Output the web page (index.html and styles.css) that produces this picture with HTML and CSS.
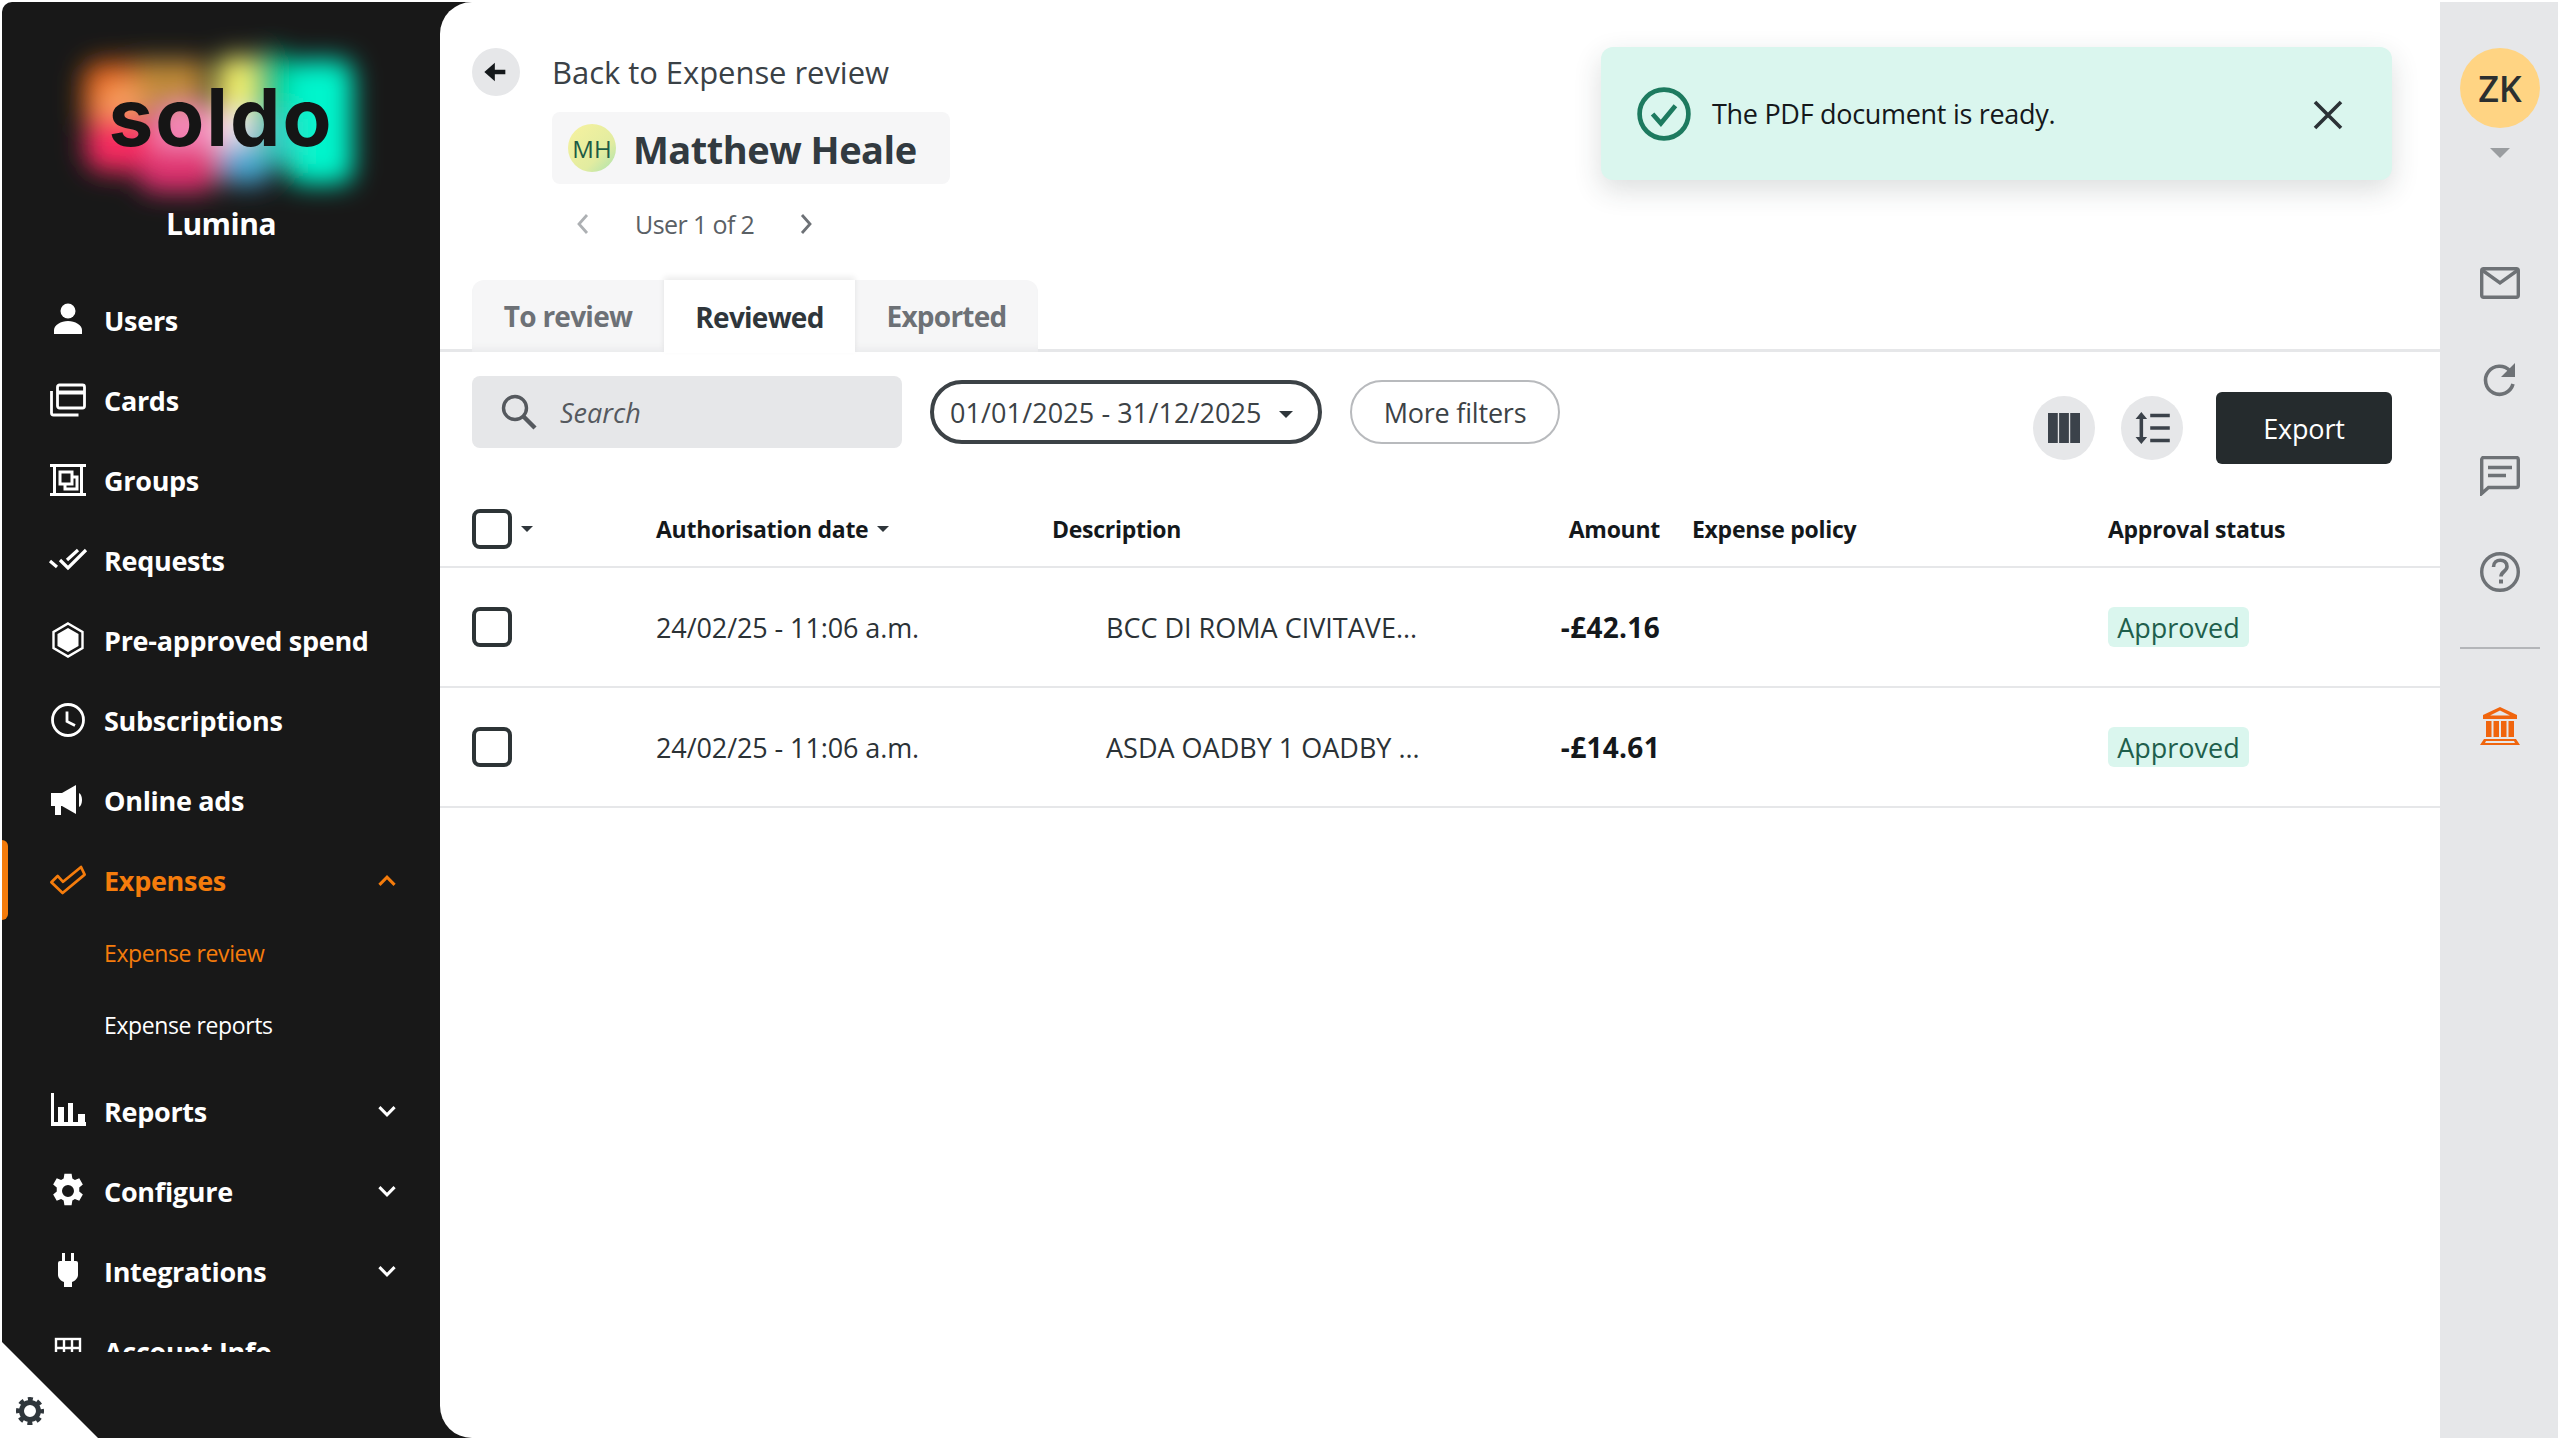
FILE: index.html
```html
<!DOCTYPE html>
<html lang="en">
<head>
<meta charset="utf-8">
<title>Expense review</title>
<link rel="stylesheet" href="styles.css">
</head>
<body>
<div class="shell">
  <aside class="sidebar">
    <div class="brand">
      <div class="logo">
        <svg class="logo-glow" viewBox="0 0 320 160" aria-hidden="true">
          <defs><filter id="blur" x="-30%" y="-30%" width="160%" height="160%"><feGaussianBlur stdDeviation="13"/></filter></defs>
          <g filter="url(#blur)">
            <rect x="22" y="22" width="62" height="70" rx="18" fill="#e8691a"/>
            <rect x="74" y="20" width="70" height="52" fill="#c08a38"/>
            <ellipse cx="62" cy="68" rx="24" ry="24" fill="#f6a061"/>
            <rect x="24" y="78" width="74" height="54" rx="20" fill="#f62a60"/>
            <rect x="92" y="66" width="70" height="68" rx="18" fill="#f586b8"/>
            <rect x="78" y="108" width="78" height="44" rx="16" fill="#e03070"/>
            <rect x="156" y="16" width="40" height="68" rx="12" fill="#f2ee6a"/>
            <rect x="160" y="72" width="34" height="40" fill="#eeecf6"/>
            <rect x="160" y="104" width="50" height="40" rx="12" fill="#4aa6d4"/>
            <rect x="194" y="12" width="34" height="76" rx="10" fill="#0cbf83"/>
            <rect x="226" y="20" width="66" height="124" rx="14" fill="#00f5cc"/>
            <rect x="198" y="70" width="38" height="54" fill="#30ccc0"/>
          </g>
        </svg>
        <span class="logo-word">soldo</span>
      </div>
      <div class="company">Lumina</div>
    </div>
    <nav class="nav">
      <a class="nav-item"><svg class="nav-icon" viewBox="0 0 36 36"><circle cx="18" cy="9" r="7.500" fill="currentColor"/><path d="M4 32v-4c0-5 7-9 14-9s14 4 14 9v4z" fill="currentColor"/></svg><span>Users</span></a>
      <a class="nav-item"><svg class="nav-icon" viewBox="0 0 36 36" fill="none" stroke="currentColor" stroke-width="2.800"><rect x="7.500" y="3" width="27" height="23" rx="2"/><path d="M7.500 10.500h27" stroke-width="4"/><path d="M1.500 9v22a2 2 0 0 0 2 2h25"/></svg><span>Cards</span></a>
      <a class="nav-item"><svg class="nav-icon" viewBox="0 0 36 36" fill="none" stroke="currentColor" stroke-width="3"><path d="M4.500 2v32M31.500 2v32M0 3.500h36M0 32.500h36"/><path d="M10 10h12v12H10z"/><path d="M15 22v5h12V15h-5"/></svg><span>Groups</span></a>
      <a class="nav-item"><svg class="nav-icon" viewBox="0 0 36 36" fill="none" stroke="currentColor" stroke-width="3.200"><path d="M0 19l7 6M10 18l8 8L36 8M17 18l11-10"/></svg><span>Requests</span></a>
      <a class="nav-item"><svg class="nav-icon" viewBox="0 0 36 36"><path d="M18 1.500l14.500 8.500v16L18 34.500 3.500 26V10z" fill="none" stroke="currentColor" stroke-width="2.400"/><path d="M18 6l10.500 6v12L18 30 7.500 24V12z" fill="currentColor"/></svg><span>Pre-approved spend</span></a>
      <a class="nav-item"><svg class="nav-icon" viewBox="0 0 36 36" fill="none" stroke="currentColor" stroke-width="2.800"><circle cx="18" cy="18" r="15.500"/><path d="M17 9.500v10l8 4"/></svg><span>Subscriptions</span></a>
      <a class="nav-item"><svg class="nav-icon" viewBox="0 0 36 36"><path d="M1 11h11l14-8v29l-14-8h-1l0 9H5v-9H1z" fill="currentColor"/><path d="M29 11c4 2 4 12 0 14z" fill="currentColor"/></svg><span>Online ads</span></a>
      <a class="nav-item nav-active"><svg class="nav-icon" viewBox="0 0 40 32" fill="none" stroke="currentColor" stroke-width="3"><path d="M1.500 18.500L14 30.500 38.500 10l-4-8.500L14.500 18l-6-6.500z" stroke-linejoin="round"/></svg><span>Expenses</span><svg class="chev" viewBox="0 0 18 12"><path d="M2 10l7-7 7 7" fill="none" stroke="currentColor" stroke-width="2.800"/></svg></a>
      <a class="sub-item sub-active">Expense review</a>
      <a class="sub-item">Expense reports</a>
      <a class="nav-item"><svg class="nav-icon" viewBox="0 0 36 36" fill="currentColor"><path d="M1 0h3v29h32v4H1z"/><path d="M8 14h6v15H8zM18 10h5v19h-5zM28 21h7v8h-7z"/></svg><span>Reports</span><svg class="chev" viewBox="0 0 18 12"><path d="M2 2l7 7 7-7" fill="none" stroke="currentColor" stroke-width="2.800"/></svg></a>
      <a class="nav-item"><svg class="nav-icon" viewBox="0 0 24 24" fill="currentColor"><path fill-rule="evenodd" d="M14.400 0.500l.5 3.100 1.700 1 2.900-1.100 2.400 4.100-2.400 2v2.800l2.400 2-2.400 4.100-2.900-1.100-1.700 1-.5 3.100H9.600l-.5-3.100-1.700-1-2.900 1.100-2.400-4.100 2.400-2V9.600l-2.400-2 2.400-4.100 2.900 1.100 1.700-1 .5-3.100zM12 8a4 4 0 1 0 0 8 4 4 0 0 0 0-8z"/></svg><span>Configure</span><svg class="chev" viewBox="0 0 18 12"><path d="M2 2l7 7 7-7" fill="none" stroke="currentColor" stroke-width="2.800"/></svg></a>
      <a class="nav-item"><svg class="nav-icon" viewBox="0 0 36 36" fill="currentColor"><path d="M12 0h3v8h6V0h3v8h2a2 2 0 0 1 2 2v12c0 3-3 6-6 7v5h-8v-5c-3-1-6-4-6-7V10a2 2 0 0 1 2-2h2z"/></svg><span>Integrations</span><svg class="chev" viewBox="0 0 18 12"><path d="M2 2l7 7 7-7" fill="none" stroke="currentColor" stroke-width="2.800"/></svg></a>
      <a class="nav-item"><svg class="nav-icon" viewBox="0 0 36 36" fill="none" stroke="currentColor" stroke-width="2.400"><rect x="6" y="6" width="24" height="24"/><path d="M6 15h24M6 22h24M14 6v24M22 6v24"/></svg><span>Account Info</span></a>
    </nav>
    <div class="corner"><svg class="corner-gear" viewBox="0 0 28 28" fill="none" stroke="currentColor"><circle cx="14" cy="14" r="8.500" stroke-width="5"/><circle cx="14" cy="14" r="12" stroke-width="4" stroke-dasharray="5 4.425" stroke-dashoffset="2.500"/></svg></div>
  </aside>

  <main class="main">
    <header class="head">
      <div class="back-row">
        <span class="round-btn back-btn"><svg viewBox="0 0 24 24" class="back-ico"><path d="M20 10v4h-9v6L2 12l9-8v6z" fill="currentColor"/></svg></span>
        <span class="back-text">Back to Expense review</span>
      </div>
      <div class="person"><span class="person-av">MH</span><h1 class="person-name">Matthew Heale</h1></div>
      <div class="pager">
        <svg class="pager-ico pager-off" viewBox="0 0 14 22"><path d="M11 2L3 11l8 9" fill="none" stroke="currentColor" stroke-width="2.800"/></svg>
        <span>User 1 of 2</span>
        <svg class="pager-ico" viewBox="0 0 14 22"><path d="M3 2l8 9-8 9" fill="none" stroke="currentColor" stroke-width="2.800"/></svg>
      </div>
    </header>

    <div class="toast">
      <svg class="toast-ok" viewBox="0 0 52 52" fill="none" stroke="#1d7a5f"><circle cx="26" cy="26" r="23.500" stroke-width="4.500"/><path d="M15 26l8 9 14-17" stroke-width="4.500"/></svg>
      <span class="toast-text">The PDF document is ready.</span>
      <svg class="toast-x" viewBox="0 0 30 30" fill="none" stroke="#2b3236" stroke-width="3.600"><path d="M2 2l26 26M28 2L2 28"/></svg>
    </div>

    <div class="tabs">
      <span class="tab">To review</span>
      <span class="tab tab-on">Reviewed</span>
      <span class="tab">Exported</span>
    </div>

    <div class="toolbar">
      <div class="search">
        <svg class="search-ico" viewBox="0 0 36 36" fill="none" stroke="currentColor"><circle cx="14" cy="14" r="11.500" stroke-width="3.400"/><path d="M22.500 22.500L34 34" stroke-width="4.400"/></svg>
        <span>Search</span>
      </div>
      <div class="date-pill"><span>01/01/2025 - 31/12/2025</span><i class="caret caret-md"></i></div>
      <div class="filter-pill">More filters</div>
      <div class="tools">
        <span class="round-btn tool-btn"><svg class="tool-ico" viewBox="0 0 36 36" fill="currentColor"><path d="M0 1h11v34H0zM12.500 1h11v34h-11zM25 1h11v34H25z"/></svg></span>
        <span class="round-btn tool-btn tool-gap"><svg class="tool-ico" viewBox="0 0 40 36" fill="currentColor"><path d="M8 0l6.500 8h-4.500v20h4.500L8 36l-6.500-8h4.500V8H1.500zM18 2h22v4H18zM18 16h22v4H18zM18 30h22v4H18z"/></svg></span>
        <span class="export">Export</span>
      </div>
    </div>

    <section class="table">
      <div class="row row-head">
        <div class="cell-check"><span class="check"></span><i class="caret caret-sm"></i></div>
        <div class="th">Authorisation date<i class="caret caret-sm"></i></div>
        <div class="th">Description</div>
        <div class="th th-amount">Amount</div>
        <div class="th">Expense policy</div>
        <div class="th">Approval status</div>
      </div>
      <div class="row row-body">
        <div class="cell-check"><span class="check"></span></div>
        <div>24/02/25 - 11:06 a.m.</div>
        <div class="td-desc">BCC DI ROMA CIVITAVE...</div>
        <div class="td-amount">-£42.16</div>
        <div></div>
        <div><span class="badge">Approved</span></div>
      </div>
      <div class="row row-body">
        <div class="cell-check"><span class="check"></span></div>
        <div>24/02/25 - 11:06 a.m.</div>
        <div class="td-desc">ASDA OADBY 1 OADBY ...</div>
        <div class="td-amount">-£14.61</div>
        <div></div>
        <div><span class="badge">Approved</span></div>
      </div>
    </section>
  </main>

  <aside class="rail">
    <div class="rail-avatar">ZK</div>
    <i class="caret caret-rail"></i>
    <svg class="rail-ico ico-mail" viewBox="0 0 40 32" fill="none" stroke="currentColor" stroke-width="3.400"><rect x="1.700" y="1.700" width="36.600" height="28.600" rx="2"/><path d="M2 3l18 13L38 3"/></svg>
    <svg class="rail-ico ico-reload" viewBox="0 0 36 36" fill="none" stroke="currentColor" stroke-width="3.600"><path d="M31 22a14 14 0 1 1-3-13"/><path d="M33 1v14H19z" fill="currentColor" stroke="none"/></svg>
    <svg class="rail-ico ico-chat" viewBox="0 0 40 40" fill="none" stroke="currentColor" stroke-width="3.400"><path d="M1.700 3.500a2 2 0 0 1 2-2h32.600a2 2 0 0 1 2 2v26a2 2 0 0 1-2 2H8.500l-6.800 6z"/><path d="M8 11.500h24M8 19.500h18" stroke-width="3.600"/></svg>
    <svg class="rail-ico ico-help" viewBox="0 0 40 40"><circle cx="20" cy="20" r="18.300" fill="none" stroke="currentColor" stroke-width="3.400"/><path d="M13.500 15c0-9 13.500-9 13.500-.5 0 5-6 5-6 10" fill="none" stroke="currentColor" stroke-width="3.600"/><rect x="19" y="27.500" width="4" height="4" fill="currentColor"/></svg>
    <div class="rail-line"></div>
    <svg class="rail-ico ico-bank" viewBox="0 0 40 38" fill="currentColor"><path d="M20 0l17 8v4H3V8zM20 3.500L10 8.500h20z" fill-rule="evenodd"/><path d="M6 14h5.500v16H6zM13.500 14H19v16h-5.500zM21 14h5.500v16H21zM28.500 14H34v16h-5.500z"/><path d="M4 32h32l4 6H0zM6 34l-1 2h30l-1-2z" fill-rule="evenodd"/></svg>
  </aside>
</div>
</body>
</html>
```

FILE: styles.css
```css
* { box-sizing: border-box; }
html, body { margin: 0; padding: 0; height: 100%; background: #fff; }
body { font-family: "Open Sans", "Noto Sans", sans-serif; color: #2f363b; }
i { display: block; font-style: normal; }
a { display: flex; color: inherit; }

.shell { display: flex; width: 2560px; height: 1440px; padding: 2px; overflow: hidden; background: #fff; }

/* sidebar */
.sidebar { position: relative; flex: none; width: 470px; height: 1436px; background: #181818; border-radius: 10px 0 0 0; color: #fff; display: flex; flex-direction: column; margin-right: -32px; }
.brand { flex: none; height: 278px; display: flex; flex-direction: column; align-items: center; padding-right: 32px; }
.logo { position: relative; width: 320px; height: 160px; margin-top: 38px; display: flex; align-items: center; justify-content: center; }
.logo-glow { position: absolute; inset: 0; width: 320px; height: 160px; overflow: visible; }
.logo-word { position: relative; font-family: Inter, "Liberation Sans", sans-serif; font-weight: 700; font-size: 80px; letter-spacing: 2px; line-height: 1; color: #151515; margin-top: -7px; }
.company { margin-top: 2px; font-size: 30px; font-weight: 700; line-height: 44px; letter-spacing: -.5px; }
.nav { flex: none; height: 1072px; overflow: hidden; padding-right: 32px; }
.nav-item { align-items: center; height: 80px; padding-left: 48px; font-size: 27px; font-weight: 700; letter-spacing: -.3px; position: relative; }
.nav-item > span { flex: 1; }
.nav-icon { flex: none; width: 36px; height: 36px; margin-right: 18px; overflow: visible; }
.nav-active { color: #f57c0c; }
.nav-active::before { content: ""; position: absolute; left: 0; top: 0; width: 6px; height: 80px; background: #f57c0c; border-radius: 0 6px 6px 0; }
.chev { flex: none; width: 20px; height: 13px; margin-right: 43px; }
.sub-item { align-items: center; height: 72px; padding-left: 102px; font-size: 23px; letter-spacing: -.4px; }
.sub-active { color: #f57c0c; margin-top: -3px; }
.sub-item + .nav-item { margin-top: 10px; }
.corner { position: absolute; left: 0; bottom: 0; width: 96px; height: 96px; background: #fff; clip-path: polygon(0 0, 100% 100%, 0 100%); }
.corner-gear { position: absolute; left: 14px; bottom: 13px; width: 28px; height: 28px; color: #2f363b; }

/* main */
.main { position: relative; flex: 1; min-width: 0; background: #fff; border-radius: 32px 0 0 32px; height: 1436px; }
.head { padding: 46px 0 0 32px; height: 278px; }
.back-row { display: flex; align-items: center; height: 48px; }
.round-btn { display: flex; align-items: center; justify-content: center; border-radius: 50%; background: #e6e7e9; }
.back-btn { width: 48px; height: 48px; }
.back-ico { width: 28px; height: 28px; color: #14181b; }
.back-text { margin-left: 32px; font-size: 31px; letter-spacing: -.05px; color: #3a4146; }
.person { display: inline-flex; align-items: center; margin: 16px 0 0 80px; width: 398px; height: 72px; padding-left: 16px; background: #f6f6f7; border-radius: 8px; vertical-align: top; }
.person-av { display: flex; width: 48px; height: 48px; align-items: center; justify-content: center; border-radius: 50%; background: linear-gradient(135deg, #f7f29f, #e2eca0 65%, #a8e2b0); color: #1d5b45; font-size: 24px; }
.person-name { margin: 2px 0 0 17px; font-size: 38px; font-weight: 700; letter-spacing: -.5px; color: #323a40; }
.pager { display: flex; align-items: center; margin: 21px 0 0 104px; height: 38px; font-size: 25px; letter-spacing: -.6px; color: #5a6065; }
.pager-ico { width: 14px; height: 22px; color: #6d7176; }
.pager-off { color: #adb0b3; }
.pager span { margin: 0 45px 0 45px; }

/* toast */
.toast { position: absolute; left: 1161px; top: 45px; width: 791px; height: 133px; display: flex; align-items: center; padding: 0 0 0 36px; background: #daf6ee; border-radius: 12px; box-shadow: 0 10px 28px rgba(40,50,50,.16); }
.toast-ok { flex: none; width: 54px; height: 54px; }
.toast-text { flex: 1; margin-left: 21px; font-size: 27px; letter-spacing: -.3px; color: #14181b; }
.toast-x { flex: none; width: 30px; height: 30px; margin-right: 49px; margin-top: 3px; }

/* tabs */
.tabs { display: flex; height: 72px; padding-left: 32px; border-bottom: 3px solid #e6e7e9; }
.tab { display: flex; align-items: center; justify-content: center; height: 72px; flex: none; width: 192px; background: #f6f6f7; color: #6d7176; font-size: 28px; font-weight: 700; letter-spacing: -.75px; box-shadow: inset 0 -8px 8px -6px #e6e7e9; }
.tab:first-child { border-radius: 12px 0 0 0; }
.tab:last-child { border-radius: 0 12px 0 0; width: 183px; }
.tab-on { background: #fff; color: #2f363b; box-shadow: 0 -3px 6px rgba(0,0,0,.08); position: relative; height: 73px; width: 191px; }

/* toolbar */
.toolbar { display: flex; align-items: flex-start; height: 140px; padding: 24px 48px 0 32px; }
.search { display: flex; align-items: center; width: 430px; height: 72px; padding-left: 29px; background: #e6e7e9; border-radius: 8px; color: #55595e; font-size: 27px; font-style: italic; }
.search-ico { width: 36px; height: 36px; margin-right: 23px; }
.date-pill { display: flex; align-items: center; width: 392px; height: 64px; margin: 4px 0 0 28px; padding-left: 16px; border: 4px solid #3c4246; border-radius: 32px; font-size: 27px; letter-spacing: .1px; color: #3c4246; }
.caret { width: 0; height: 0; border-style: solid; border-color: currentColor transparent transparent transparent; }
.caret-md { margin: 4px 0 0 17px; border-width: 7px 7px 0 7px; color: #2f363b; }
.caret-sm { border-width: 6px 6px 0 6px; color: #2f363b; }
.filter-pill { display: flex; align-items: center; justify-content: center; width: 210px; height: 64px; margin: 4px 0 0 28px; border: 2px solid #b8babd; border-radius: 32px; font-size: 27px; letter-spacing: -.2px; color: #3c4246; }
.tools { margin-left: auto; display: flex; align-items: center; height: 72px; margin-top: 16px; }
.tool-btn { width: 62px; height: 64px; }
.tool-gap { margin-left: 26px; }
.tool-ico { width: 36px; height: 32px; color: #3b424a; }
.export { display: flex; align-items: center; justify-content: center; width: 176px; height: 72px; margin-left: 33px; background: #252b2d; color: #fff; border-radius: 6px; font-size: 27px; letter-spacing: -.2px; }

/* table */
.row { display: grid; grid-template-columns: 184px 396px 382px 258px 416px 1fr; align-items: center; padding-left: 32px; border-bottom: 2px solid #e6e7e9; }
.row-head { height: 76px; padding-bottom: 1px; }
.row-body { height: 120px; font-size: 27px; letter-spacing: -.1px; color: #2b3236; }
.cell-check { display: flex; align-items: center; }
.check { display: block; width: 40px; height: 40px; border: 4px solid #2d3436; border-radius: 8px; }
.cell-check .caret { margin-left: 9px; }
.th { display: flex; align-items: center; font-size: 23px; font-weight: 700; letter-spacing: -.28px; color: #14181b; white-space: nowrap; }
.th .caret { margin-left: 9px; }
.th-amount { justify-content: flex-end; }
.td-desc { padding-left: 54px; white-space: nowrap; letter-spacing: 0; }
.td-amount { font-weight: 700; font-size: 28px; text-align: right; white-space: nowrap; color: #14181b; letter-spacing: .3px; }
.th-amount, .td-amount { margin-right: 32px; }
.badge { display: inline-flex; align-items: center; justify-content: center; width: 141px; height: 40px; background: #daf6ee; border-radius: 6px; color: #1f5f4c; letter-spacing: 0; }

/* rail */
.rail { flex: none; width: 118px; height: 1436px; padding-left: 2px; background: #e6e7e9; display: flex; flex-direction: column; align-items: center; color: #6e7276; }
.rail-avatar { display: flex; align-items: center; justify-content: center; width: 80px; height: 80px; margin-top: 46px; border-radius: 50%; background: #ffd483; color: #2b2f30; font-size: 36px; font-weight: 600; }
.caret-rail { margin-top: 20px; border-width: 10px 10px 0 10px; color: #9a9da0; }
.rail-ico { display: block; flex: none; }
.ico-mail { width: 40px; height: 32px; margin-top: 109px; }
.ico-reload { width: 36px; height: 36px; margin-top: 63px; }
.ico-chat { width: 40px; height: 40px; margin-top: 58px; }
.ico-help { width: 40px; height: 40px; margin-top: 56px; }
.rail-line { flex: none; width: 80px; height: 2px; margin-top: 55px; background: #b4b6b9; }
.ico-bank { width: 40px; height: 38px; margin-top: 58px; color: #f0650e; }
```
